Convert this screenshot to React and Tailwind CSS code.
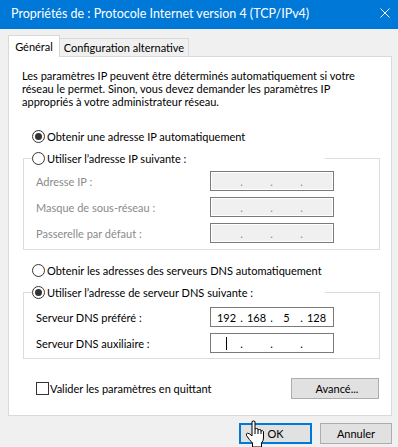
const Radio = ({ checked }) => (
  <span className="w-[13px] h-[13px] rounded-full border border-[#333333] bg-white flex items-center justify-center shrink-0">
    {checked && <span className="w-[7px] h-[7px] rounded-full bg-[#333333]" />}
  </span>
);

const IpBox = ({ values = ['', '', '', ''], disabled, caret }) => (
  <div
    className={
      disabled
        ? 'h-[20px] w-[124px] border border-[#7a7a7a] bg-[#f0f0f0] shadow-[inset_0_0_0_1px_#ffffff] flex items-center pl-[2px] text-[#8a8a8a]'
        : 'h-[20px] w-[124px] border border-[#7a7a7a] bg-white flex items-center pl-[2px] text-black'
    }
  >
    {values.map((v, i) => (
      <div key={i} className="flex items-center">
        <span className="w-[27px] flex justify-center">
          {caret && i === 0 ? <span className="w-px h-[13px] bg-black" /> : v}
        </span>
        {i < 3 && <span className="w-[3px] flex justify-center">.</span>}
      </div>
    ))}
  </div>
);

const Row = ({ label, disabled, children }) => (
  <div className="flex items-center h-[20px]">
    <span className={disabled ? 'w-[174px] text-[#8a8a8a]' : 'w-[174px]'}>{label}</span>
    {children}
  </div>
);

export default function App() {
  return (
    <div className="w-[398px] h-[447px] bg-[#f0f0f0] overflow-hidden relative text-[11px] leading-[13px] text-black font-['Lato','Liberation_Sans',sans-serif]">
      {/* title bar */}
      <div className="h-[29px] bg-[#0078d7] flex items-start text-white text-[12.5px]">
        <span className="pl-[11px] pt-[7px] whitespace-nowrap">Propriétés de : Protocole Internet version 4 (TCP/IPv4)</span>
        <svg className="ml-auto mr-[8px] mt-[8px]" width="10" height="10" viewBox="0 0 10 10">
          <path d="M0.5 0.5 L9.5 9.5 M9.5 0.5 L0.5 9.5" stroke="#ffffff" strokeWidth="1" />
        </svg>
      </div>

      {/* tabs */}
      <div className="flex items-end mt-[6px] ml-[8px] whitespace-nowrap">
        <div className="relative z-10 -mb-px w-[52px] h-[22px] bg-white border border-b-0 border-[#d9d9d9] flex items-center justify-center pb-[1px]">
          Général
        </div>
        <div className="w-[129px] h-[18px] bg-[#f0f0f0] border-t border-r border-[#d9d9d9] flex items-center justify-center">
          Configuration alternative
        </div>
      </div>

      {/* panel */}
      <div className="ml-[8px] w-[384px] h-[360px] bg-white border border-[#d9d9d9] pl-[14px] whitespace-nowrap">
        <p className="-ml-px mt-[12px]">
          Les paramètres IP peuvent être déterminés automatiquement si votre
          <br />
          réseau le permet. Sinon, vous devez demander les paramètres IP
          <br />
          appropriés à votre administrateur réseau.
        </p>

        <div className="mt-[20px] ml-[9px] h-[16px] flex items-center gap-[2px]">
          <Radio checked />
          <span>Obtenir une adresse IP automatiquement</span>
        </div>

        <fieldset className="mt-[6px] w-[357px] border border-[#dcdcdc]">
          <legend className="ml-[8px] w-[293px] h-[16px] flex items-center gap-[2px]">
            <Radio />
            <span>Utiliser l’adresse IP suivante :</span>
          </legend>
          <div className="pl-[12px] pt-[5px] pb-[6px] flex flex-col gap-[6px]">
            <Row label="Adresse IP :" disabled>
              <IpBox disabled />
            </Row>
            <Row label="Masque de sous-réseau :" disabled>
              <IpBox disabled />
            </Row>
            <Row label="Passerelle par défaut :" disabled>
              <IpBox disabled />
            </Row>
          </div>
        </fieldset>

        <div className="mt-[12px] ml-[9px] h-[16px] flex items-center gap-[2px]">
          <Radio />
          <span>Obtenir les adresses des serveurs DNS automatiquement</span>
        </div>

        <fieldset className="mt-[6px] w-[357px] border border-[#dcdcdc]">
          <legend className="ml-[8px] w-[293px] h-[16px] flex items-center gap-[2px]">
            <Radio checked />
            <span>Utiliser l’adresse de serveur DNS suivante :</span>
          </legend>
          <div className="pl-[12px] pt-[7px] pb-[5px] flex flex-col gap-[6px]">
            <Row label="Serveur DNS préféré :">
              <IpBox values={['192', '168', '5', '128']} />
            </Row>
            <Row label="Serveur DNS auxiliaire :">
              <IpBox caret />
            </Row>
          </div>
        </fieldset>

        <div className="mt-[19px] w-[357px] flex items-center justify-between">
          <div className="ml-[13px] flex items-center gap-[1px]">
            <span className="w-[13px] h-[13px] border border-[#333333] bg-white" />
            <span>Valider les paramètres en quittant</span>
          </div>
          <button className="mr-px w-[88px] h-[21px] bg-[#e1e1e1] border border-[#adadad] flex items-center justify-center pl-[4px]">
            Avancé...
          </button>
        </div>
      </div>

      {/* dialog buttons */}
      <div className="mt-[7px] pr-[6px] flex justify-end gap-[8px]">
        <button className="w-[73px] h-[21px] bg-[#e1e1e1] border-2 border-[#0078d7] flex items-center justify-center">
          OK
        </button>
        <button className="w-[72px] h-[21px] bg-[#e1e1e1] border border-[#adadad] flex items-center justify-center">
          Annuler
        </button>
      </div>

      {/* hand cursor over OK */}
      <svg className="absolute left-[244px] top-[420px]" width="20" height="28" viewBox="0 0 20 28">
        <path
          d="M8 1.5 Q9.5 0.5 11 1.5 L11 9 Q12.5 8 14 9 L14 10 Q15.5 9 17 10 L17 11 Q18.5 10 19.5 11.5 L19.5 18 Q19.5 21 17.5 23 L17.5 27 L8.5 27 L8.5 23 Q5 19.5 2.5 15.5 Q1.8 13.5 3.5 13.2 Q5.5 13.2 8 16 Z"
          fill="#ffffff"
          stroke="#000000"
          strokeWidth="1"
          strokeLinejoin="round"
        />
        <path d="M11 9 L11 14 M14 10 L14 14 M17 11 L17 14" stroke="#000000" strokeWidth="1" />
      </svg>
    </div>
  );
}
